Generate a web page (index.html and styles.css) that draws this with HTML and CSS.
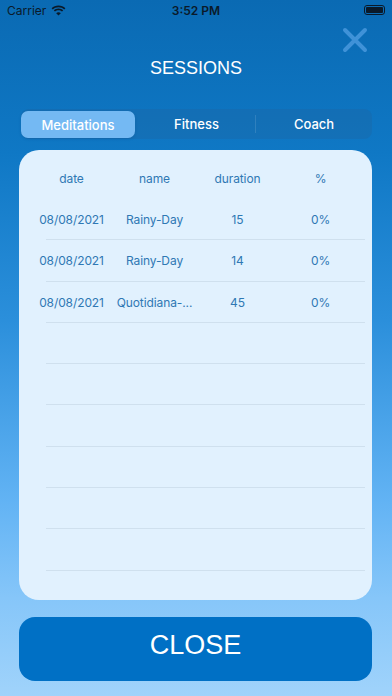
FILE: index.html
```html
<!DOCTYPE html>
<html lang="en">
  <head>
    <meta charset="UTF-8" />
    <meta name="viewport" content="width=device-width, initial-scale=1.0" />
    <title>Sessions</title>
    <link rel="stylesheet" href="styles.css">
  </head>
  <body>
    <div class="screen">
      <!-- status bar -->
      <div class="status-bar">
        <div class="carrier">
          Carrier
          <svg class="wifi" width="15" height="11" viewBox="0 0 15 11">
            <path d="M7.5 2.2c2.2 0 4.2.8 5.7 2.2l1.2-1.2C12.6 1.4 10.2.4 7.5.4S2.4 1.4.6 3.2l1.2 1.2c1.5-1.4 3.5-2.2 5.7-2.2z" fill="#0a1a2a"/>
            <path d="M7.5 5.3c1.3 0 2.5.5 3.5 1.3l1.2-1.2C11 4.2 9.3 3.5 7.5 3.5S4 4.2 2.8 5.4L4 6.6c1-.8 2.2-1.3 3.5-1.3z" fill="#0a1a2a"/>
            <path d="M7.5 10.6 9.8 8.3c-.6-.6-1.4-1-2.3-1s-1.7.4-2.3 1z" fill="#0a1a2a"/>
          </svg>
        </div>
        <div class="clock">3:52 PM</div>
        <div class="battery"><span></span></div>
      </div>

      <div class="top">
        <button class="dismiss" aria-label="close">
          <svg width="26" height="26" viewBox="0 0 26 26">
            <path d="M3 3 23 23M23 3 3 23" stroke="#3f92d8" stroke-width="4" stroke-linecap="round"/>
          </svg>
        </button>
        <h1 class="title">SESSIONS</h1>
      </div>

      <div class="segments">
        <div class="segment active">Meditations</div>
        <div class="segment">Fitness</div>
        <div class="segment divided">Coach</div>
      </div>

      <div class="card">
        <div class="row head">
          <span>date</span>
          <span>name</span>
          <span>duration</span>
          <span>%</span>
        </div>
        <div class="row">
          <span>08/08/2021</span>
          <span>Rainy-Day</span>
          <span>15</span>
          <span>0%</span>
        </div>
        <div class="row">
          <span>08/08/2021</span>
          <span>Rainy-Day</span>
          <span>14</span>
          <span>0%</span>
        </div>
        <div class="row">
          <span>08/08/2021</span>
          <span>Quotidiana-...</span>
          <span>45</span>
          <span>0%</span>
        </div>
        <div class="row"></div>
        <div class="row"></div>
        <div class="row"></div>
        <div class="row"></div>
        <div class="row"></div>
        <div class="row"></div>
        <div class="row"></div>
      </div>

      <button class="close-btn">CLOSE</button>
    </div>
  </body>
</html>
```

FILE: styles.css
```css
* {
  margin: 0;
  padding: 0;
  box-sizing: border-box;
}
body {
  width: 392px;
  height: 696px;
  overflow: hidden;
  font-family: "Inter", "Roboto", sans-serif;
}
.screen {
  width: 392px;
  height: 696px;
  display: flex;
  flex-direction: column;
  background: linear-gradient(
    180deg,
    #0a6ab3 0%,
    #0f78c5 22%,
    #2b8fdb 46%,
    #62b3f4 72%,
    #86c6f9 86%,
    #a0d3fb 100%
  );
}
.status-bar {
  height: 20px;
  display: flex;
  align-items: center;
  justify-content: space-between;
  padding: 0 7px;
  color: #0a1a2a;
  font-size: 12px;
}
.carrier {
  display: flex;
  align-items: center;
  gap: 5px;
  width: 90px;
}
.clock {
  font-weight: 600;
}
.battery {
  width: 90px;
  display: flex;
  justify-content: flex-end;
}
.battery span {
  width: 21px;
  height: 10px;
  border: 1px solid #0a1a2a;
  border-radius: 3px;
  padding: 1px;
  background: #0a1a2a;
  background-clip: content-box;
}
.top {
  display: flex;
  flex-direction: column;
  align-items: center;
}
.dismiss {
  align-self: flex-end;
  margin: 7px 24px 0 0;
  width: 26px;
  height: 26px;
  border: none;
  background: none;
  display: flex;
}
.title {
  margin-top: 4px;
  font-family: "Liberation Sans", Arial, sans-serif;
  font-weight: 400;
  font-size: 18px;
  line-height: 22px;
  color: #fff;
}
.segments {
  margin: 30px 20px 0 21px;
  height: 30px;
  display: grid;
  grid-template-columns: repeat(3, 1fr);
  border-radius: 8px;
  background: rgba(40, 90, 140, 0.22);
}
.segment {
  display: flex;
  align-items: center;
  justify-content: center;
  color: #fff;
  font-size: 13px;
  font-weight: 500;
}
.segment.active {
  margin: 2px 3px 1px 0;
  border-radius: 7px;
  background: #74b9f3;
  box-shadow: 0 1px 3px rgba(0, 40, 90, 0.15);
}
.segment.divided {
  border-left: 1px solid rgba(255, 255, 255, 0.12);
  margin: 6px 0;
}
.card {
  margin: 11px 20px 0 19px;
  height: 450px;
  overflow: hidden;
  border-radius: 20px;
  background: #e1f1fe;
  padding: 8px 7px 0 11px;
}
.row {
  height: 41.3px;
  display: grid;
  grid-template-columns: repeat(4, 83px);
  align-items: center;
  color: #2f78b4;
  font-size: 12px;
  letter-spacing: -0.1px;
  background: linear-gradient(#cfe0ee, #cfe0ee) no-repeat 16px 100% / calc(100% - 16px) 1px;
}
.row.head {
  height: 41px;
  background: none;
}
.row span {
  text-align: center;
  white-space: nowrap;
}
.close-btn {
  margin: 17px 20px 0 19px;
  height: 64px;
  border: none;
  border-radius: 16px;
  background: #0070c5;
  color: #fff;
  font-family: "Liberation Sans", Arial, sans-serif;
  font-size: 27px;
  line-height: 30px;
  padding-bottom: 8px;
}
```
